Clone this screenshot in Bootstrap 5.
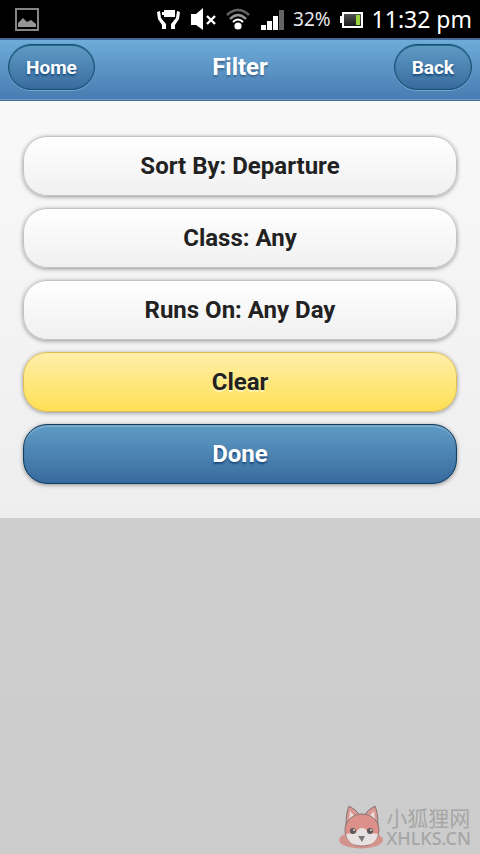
<!DOCTYPE html>
<html lang="en">
<head>
<meta charset="utf-8">
<meta name="viewport" content="width=device-width, initial-scale=1">
<title>Filter</title>
<link href="https://cdn.jsdelivr.net/npm/bootstrap@5.3.0/dist/css/bootstrap.min.css" rel="stylesheet">
<style>
body{font-family:Roboto,"Liberation Sans",sans-serif;background:linear-gradient(#d3d3d3,#cccccc) #cfcfcf;background-attachment:fixed}
.status-bar{height:38px;background:#000;color:#e8e8e8;font-family:"Noto Sans",sans-serif;padding:0 8px 0 15px}
.status-icons{gap:9px}
.battery-level{font-size:19px;line-height:38px}
.clock{font-size:23px;line-height:38px;color:#fff}
.title-bar{display:grid;grid-template-columns:1fr auto 1fr;align-items:center;padding:4px 8px 10px;background:linear-gradient(#6eacd9,#477bb1);border-top:2px solid #456a9a;border-bottom:1px solid #456f9a;box-shadow:inset 0 -1px 0 #7099c3}
.title-bar h1{font-size:24px;line-height:46px;font-weight:700;color:#fff;text-shadow:0 2px 2px #3e6790}
.btn-nav,.btn-nav:hover{height:46px;padding:0 17px;border:1px solid #145072;border-radius:23px;font-size:19px;line-height:46px;font-weight:700;color:#fff;text-shadow:0 2px 2px #194b7e;background:linear-gradient(#5f9cc5,#396b9e);box-shadow:inset 0 0 1px #145072,inset 0 1px 0 #2f6a90,0 1px 0 #79a9d2}
.filter-panel{padding:35px 23px 34px;background:linear-gradient(#f9f9f9,#eeeeee)}
.filter-list{gap:12px}
.btn-filter{height:60px;padding:0;border:1px solid #c3c3c3;border-radius:24px;font-size:24px;font-weight:700;line-height:58px;color:#222;text-shadow:0 1px 0 #fff;background:linear-gradient(#fff,#f0f0f0);box-shadow:0 1px 4px rgba(0,0,0,.4)}
.btn-filter:hover{color:#222;border-color:#c3c3c3}
.btn-clear,.btn-clear:hover{border-color:#dfbd55;background:linear-gradient(#ffefaa,#ffdf55);text-shadow:0 2px 0 #fff3b0}
.btn-done,.btn-done:hover{border-color:#123f60;color:#fff;background:linear-gradient(#5f9cc5,#396b9e);text-shadow:0 2px 2px #194b7e;box-shadow:inset 0 0 1px #123f60,inset 0 2px 0 #80b0d0,0 1px 4px rgba(0,0,0,.4)}
.watermark{padding:0 9px 5px;gap:3px;color:#a6a6a6}
.site-name{font-family:"Noto Sans CJK SC",sans-serif;font-size:21px;line-height:20px}
.site-url{font-family:"Noto Sans",sans-serif;font-size:18px;line-height:22px;font-weight:500}
</style>
<script src="https://cdn.jsdelivr.net/npm/bootstrap@5.3.0/dist/js/bootstrap.bundle.min.js"></script>
</head>
<body class="d-flex flex-column min-vh-100">
<div class="status-bar d-flex justify-content-between align-items-center">
  <svg width="24" height="24" viewBox="0 0 24 24" aria-hidden="true"><rect x="1" y="2" width="22" height="21" fill="none" stroke="#858585" stroke-width="2"/><path d="M3 20v-4l5-5 4 4 4-2 5 4v3z" fill="#969696"/></svg>
  <div class="status-icons d-flex align-items-center">
    <svg width="24" height="24" viewBox="0 0 24 24" fill="#fff" aria-hidden="true"><path d="M5 5h2V3h11v7H7V8H5z"/><path d="M0 5l3-1 1 7 5 6v5H5v-4L1 12zM23 5l-3-1-1 7-5 6v5h4v-4l4-6z"/></svg>
    <svg width="27" height="24" viewBox="0 0 27 24" fill="#fff" aria-hidden="true"><path d="M1 7h5l7-6v22l-7-5H1z"/><path d="M17 9l8 8M25 9l-8 8" stroke="#fff" stroke-width="2.4"/></svg>
    <svg width="24" height="24" viewBox="0 0 24 24" fill="none" aria-hidden="true"><path d="M1 8q11-10 22 0" stroke="#646464" stroke-width="2.4"/><path d="M4 12q8-8 16 0" stroke="#969696" stroke-width="2.4"/><path d="M7 15q5-5 10 0" stroke="#fff" stroke-width="2.2"/><circle cx="12" cy="19" r="3.6" fill="#fff"/></svg>
    <svg width="25" height="24" viewBox="0 0 25 24" fill="#fff" aria-hidden="true"><path d="M2 18h5v5H2zM8 14h5v9H8zM14 9h5v14h-5z"/><path d="M20 3h5v20h-5z" fill="#646464"/></svg>
    <span class="battery-level">32%</span>
    <svg width="23" height="24" viewBox="0 0 23 24" aria-hidden="true"><defs><linearGradient id="cell" x2="0" y2="1"><stop stop-color="#555"/><stop offset="1" stop-color="#161616"/></linearGradient></defs><path d="M0 9h3v7H0z" fill="#fff"/><rect x="3" y="6" width="19" height="14" fill="url(#cell)" stroke="#fff" stroke-width="2"/><path d="M16 8h4v10h-4z" fill="#9bd43b"/></svg>
    <span class="clock">11:32 pm</span>
  </div>
</div>
<header class="title-bar">
  <button type="button" class="btn btn-nav me-auto">Home</button>
  <h1 class="m-0">Filter</h1>
  <button type="button" class="btn btn-nav ms-auto">Back</button>
</header>
<main class="filter-panel">
  <div class="filter-list d-grid">
    <button type="button" class="btn btn-filter">Sort By: Departure</button>
    <button type="button" class="btn btn-filter">Class: Any</button>
    <button type="button" class="btn btn-filter">Runs On: Any Day</button>
    <button type="button" class="btn btn-filter btn-clear">Clear</button>
    <button type="button" class="btn btn-filter btn-done">Done</button>
  </div>
</main>
<footer class="watermark d-flex justify-content-end align-items-end mt-auto">
  <svg width="44" height="46" viewBox="0 0 44 46" aria-hidden="true">
    <ellipse cx="22" cy="37" rx="22" ry="8.5" fill="#d3948e"/>
    <g stroke="#857473" stroke-width="1"><path d="M7 22Q7 10 10 3q7 3 12 11zM39 22q0-12-3-19-7 3-12 11z" fill="#d99891"/><path d="M10 17l1-9 6 7zM36 17l-1-9-6 7z" fill="#eadbd8" stroke="none"/><ellipse cx="23" cy="27" rx="17" ry="16" fill="#dc9089"/></g>
    <path d="M7 31q5-1 10-1 2-5 6-5t6 5q5 0 10 1-2 11.500-16 11.500T7 31z" fill="#e6e1e0"/>
    <circle cx="14" cy="28" r="3" fill="#5c5656"/><circle cx="31" cy="28" r="3" fill="#5c5656"/><circle cx="15" cy="27" r="1" fill="#ddd"/><circle cx="32" cy="27" r="1" fill="#ddd"/>
    <path d="M19 33h7l-3 6z" fill="#777"/>
  </svg>
  <div><div class="site-name">小狐狸网</div><div class="site-url">XHLKS.CN</div></div>
</footer>
</body>
</html>
